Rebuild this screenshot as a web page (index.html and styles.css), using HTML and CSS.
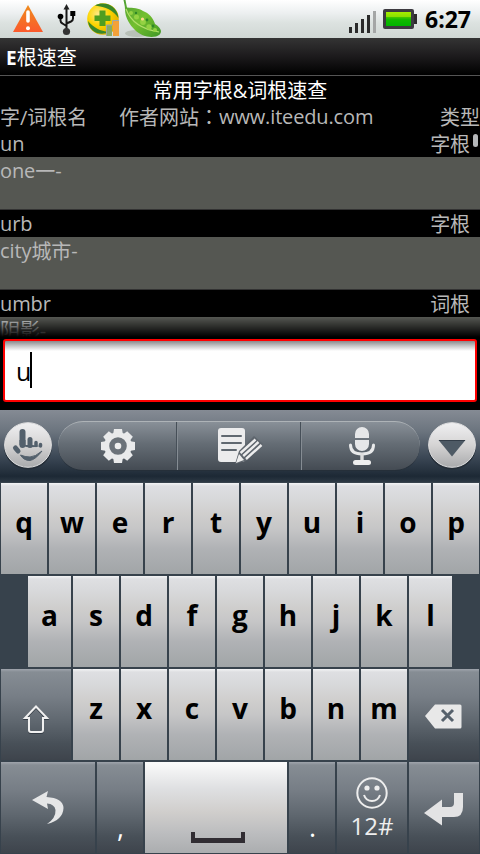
FILE: index.html
```html
<!DOCTYPE html>
<html lang="zh-CN">
<head>
<meta charset="utf-8">
<title>E根速查</title>
<link rel="stylesheet" href="styles.css">
</head>
<body>
<div class="screen">
  <header class="status">
    <svg class="notices" width="170" height="38" viewBox="0 0 170 38">
      <defs>
        <linearGradient id="warn" x1="0" y1="0" x2="0" y2="1"><stop offset="0" stop-color="#ee8b1c"/><stop offset="1" stop-color="#fb5a2c"/></linearGradient>
        <linearGradient id="pod" x1="0" y1="0" x2="1" y2="1"><stop offset="0" stop-color="#4f9f35"/><stop offset=".5" stop-color="#74c02f"/><stop offset="1" stop-color="#3f9626"/></linearGradient>
        <radialGradient id="ball" cx=".35" cy=".35" r=".7"><stop offset="0" stop-color="#ffe98a"/><stop offset=".5" stop-color="#fcd500"/><stop offset="1" stop-color="#dfae00"/></radialGradient>
      </defs>
      <path d="M28 5 43 32H13Z" fill="url(#warn)"/>
      <path d="M28 12v9" stroke="#fff" stroke-width="3.600" stroke-linecap="round"/><circle cx="28" cy="28.200" r="2" fill="#fff"/>
      <g fill="none" stroke="#161616" stroke-width="2"><path d="M66.500 8v23M60.500 17v3.500q0 2 2 3l4 2.500M73 14v4.500q0 2-2 3l-4.500 2"/></g>
      <path d="M66.500 4 69.500 9.500h-6Z" fill="#222"/><circle cx="60.500" cy="16.500" r="2.800"/><path d="M70.300 11h5v5h-5z"/><circle cx="66.500" cy="31.500" r="3.600" fill="#333"/>
      <circle cx="103" cy="19" r="15.800" fill="url(#ball)"/>
      <path d="M95 5.500C103 1 117 4 118.500 18 113 10 106 7 95 5.500ZM88 21c1 12 13 15 21 11-9-1-15-4-21-11Z" fill="#398729"/>
      <path d="M99.500 10.500h6v5h5v5.500h-5v5h-6v-5h-5v-5.500h5z" fill="#4f9e20"/>
      <path d="M107 25h5v11h-6V25Z" fill="#86a968"/><path d="M113 21h6v15h-6z" fill="#f3a13a"/><path d="M106.500 36V25h6v-4.500H119" fill="none" stroke="#9aa7aa"/>
      <ellipse cx="137" cy="33.500" rx="12" ry="3.500" fill="#b9c1b8"/>
      <path d="M123.500 0C124 3 125 6 125 9c0 9 5 16 10 21 6 6 14 8 21 6.500q5-1.500 5-5.500-1-4-6-7c-2-6-6-11-12-13-4-3-10-3-16-3.500Q126 3 125.500 0Z" fill="url(#pod)"/>
      <path d="M126 9c4 11 14 20 33 23" fill="none" stroke="#b2df6a" stroke-width="1.200"/>
      <g fill="#94d243"><circle cx="131" cy="13" r="2"/><circle cx="136.500" cy="17" r="2.500"/><circle cx="143" cy="22" r="2.900"/><circle cx="149" cy="27" r="2.700"/><circle cx="155" cy="30" r="2"/></g>
      <g fill="#2f8727"><circle cx="136" cy="13" r="1.200"/><circle cx="147" cy="20" r="1.400"/><circle cx="153" cy="26" r="1.400"/></g>
      <circle cx="142.500" cy="19" r="1.600" fill="#ffd98a"/>
    </svg>
    <svg class="meters" width="72" height="38" viewBox="0 0 72 38">
      <defs><linearGradient id="bat" x1="0" y1="0" x2="0" y2="1"><stop offset="0" stop-color="#a5ee00"/><stop offset=".33" stop-color="#8cdf00"/><stop offset=".34" stop-color="#4fc900"/><stop offset=".55" stop-color="#12b900"/><stop offset="1" stop-color="#00b400"/></linearGradient></defs>
      <path d="M1 27h3v6H1zM7 23h3v10H7zM13 19h3v14h-3zM19 15h3v18h-3z" fill="#2b2b2b"/><path d="M25 11h3v22h-3z" fill="#a4a6a6"/>
      <rect x="35" y="9" width="31" height="20" rx="2" fill="#3d3a40"/><path d="M66 14h3v10h-3z" fill="#2d2b2d"/><path d="M38 12h25v14H38z" fill="url(#bat)"/>
    </svg>
    <span class="clock">6:27</span>
  </header>
  <div class="titlebar"><b>E</b>根速查</div>
  <main class="content">
    <h1 class="heading">常用字根&amp;词根速查</h1>
    <div class="columns"><span class="zh">字/词根名</span><span class="site"><span class="zh">作者网站<span class="colon" lang="zh-Hant">：</span></span>www.iteedu.com</span><span class="zh">类型</span></div>
    <div class="list">
      <div class="word"><span>un</span><span class="zh">字根</span></div>
      <div class="meaning">one<span class="zh">一</span>-</div>
      <div class="word"><span>urb</span><span class="zh">字根</span></div>
      <div class="meaning">city<span class="zh">城市</span>-</div>
      <div class="word"><span>umbr</span><span class="zh">词根</span></div>
      <div class="meaning last"><span class="zh">阴影</span>-</div>
      <i class="thumb"></i><i class="fade"></i>
    </div>
    <div class="search"><span class="typed">u</span><i class="caret"></i></div>
  </main>
  <section class="keyboard">
    <div class="tools">
      <svg width="54" height="54" viewBox="0 0 54 54">
        <defs><linearGradient id="metal" x1="0" y1="0" x2="0" y2="1"><stop offset="0" stop-color="#f0f0f2"/><stop offset=".5" stop-color="#d5d4d4"/><stop offset="1" stop-color="#a9aaac"/></linearGradient></defs>
        <ellipse cx="27" cy="28.500" rx="24" ry="23" fill="#242d37"/><ellipse cx="27" cy="27" rx="23.400" ry="22.300" fill="url(#metal)" stroke="#e0e0e1"/>
        <g fill="none" stroke="#53606c" stroke-linecap="round"><path d="M21.500 14v13" stroke-width="6"/><path d="M29 21.500v6" stroke-width="5"/><path d="M35 24.500v3M39.500 26.500v1.500" stroke-width="3.500"/><path d="m14.500 30 2.500 3" stroke-width="5"/></g>
        <path d="M18.500 22h6v5h7l8 1q-8 2-14 1l-7-2z" fill="#53606c"/><path d="M19.500 37q3 5.500 9.500 5.500 5.500-1 12-9.500-7 6-12 6-5 0-9.500-2Z" fill="#53606c" stroke="#53606c"/>
      </svg>
      <div class="pill">
        <span class="tool"><svg width="36" height="36" viewBox="-18 -18 36 36">
          <g fill="#e9eaeb"><path d="M-4-17h8l1 6H-5zM-4 17h8l1-6H-5zM-17-4v8l6 1V-5zM17-4v8l-6 1V-5z"/><path transform="rotate(45)" d="M-4-17h8l1 7H-5zM-4 17h8l1-7H-5zM-17-4v8l7 1V-5zM17-4v8l-7 1V-5z"/></g>
          <circle r="11.300" fill="#6b7279" stroke="#e9eaeb" stroke-width="5"/><circle r="3.300" fill="#eee"/>
        </svg></span>
        <span class="tool"><svg width="46" height="38" viewBox="0 0 46 38">
          <rect x="1" y="1" width="27" height="34" rx="3" fill="#ececed"/><path d="M5 9h19M5 16h19M5 23h14" stroke="#606870" stroke-width="2" stroke-linecap="round"/>
          <path d="m18 37 4-13L37 9l9 8-17 17Z" fill="#5e656d"/><path d="m19 36 3-9 5 6Z" fill="#eee"/><path d="m23.500 26 15-13.500M26.200 29 41.500 15M29 32 44.500 18" stroke="#ededee" stroke-width="2.400"/>
        </svg></span>
        <span class="tool"><svg width="28" height="40" viewBox="0 0 28 40">
          <path d="M7 12V8a7 7 0 0 1 14 0v4zM7 14h14v4a7 7 0 0 1-14 0z" fill="#e6e7e9"/><path d="M2.500 19q0 9 11.500 9t11.500-9" fill="none" stroke="#e8e9ea" stroke-width="3" stroke-linecap="round"/><path d="M12.300 27h3.400v7h-3.400z" fill="#ddd"/><rect x="5" y="34" width="18" height="5" rx="2.500" fill="#eee"/>
        </svg></span>
      </div>
      <svg width="54" height="54" viewBox="0 0 54 54">
        <ellipse cx="27" cy="28.500" rx="24" ry="23" fill="#242d37"/><ellipse cx="27" cy="27" rx="23.400" ry="22.300" fill="url(#metal)" stroke="#e0e0e1"/><path d="M13.500 22h27L27 38.500Z" fill="#4e5a65"/><path d="M14 22.500h26" stroke="#333d48"/>
      </svg>
    </div>
    <div class="row"><kbd>q</kbd><kbd>w</kbd><kbd>e</kbd><kbd>r</kbd><kbd>t</kbd><kbd>y</kbd><kbd>u</kbd><kbd>i</kbd><kbd>o</kbd><kbd>p</kbd></div>
    <div class="row inset"><kbd class="edge-left">a</kbd><kbd>s</kbd><kbd>d</kbd><kbd>f</kbd><kbd>g</kbd><kbd>h</kbd><kbd>j</kbd><kbd>k</kbd><kbd class="edge-right">l</kbd></div>
    <div class="row">
      <kbd class="dark w72"><svg width="70" height="91" viewBox="0 0 70 91"><path d="M35 37.500 24 49h4v12q0 2 2 2h10q2 0 2-2V49h4Z" fill="none" stroke="#343c45" stroke-width="2" transform="translate(0 1)"/><path d="M35 37.500 24 49h4v12q0 2 2 2h10q2 0 2-2V49h4Z" fill="none" stroke="#f0f0f0" stroke-width="2"/></svg></kbd>
      <kbd>z</kbd><kbd>x</kbd><kbd>c</kbd><kbd>v</kbd><kbd>b</kbd><kbd>n</kbd><kbd>m</kbd>
      <kbd class="dark w72"><svg width="70" height="91" viewBox="0 0 70 91"><path d="M16 47 26 35.500h25q1.500 0 1.500 1.500v21q0 1.500-1.500 1.500H26Z" fill="#e8e8e8"/><path d="m33 41 11 11m0-11L33 52" stroke="#56616c" stroke-width="3"/></svg></kbd>
    </div>
    <div class="row">
      <kbd class="dark w96"><svg width="94" height="91" viewBox="0 0 94 91"><path d="M31 38 47 29l-1.500 6Q62 36 62.500 46 62 58 46 62q9-6 8.500-14-1-6-8.500-6.500L47 47Z" fill="#e5e6e7"/></svg></kbd>
      <kbd class="dark mark">,</kbd>
      <kbd class="space"><i></i></kbd>
      <kbd class="dark mark">.</kbd>
      <kbd class="dark w72 symbols"><svg width="34" height="34" viewBox="-17 -17 34 34"><g fill="none" stroke="#eee" stroke-width="2"><circle r="14.700"/><path d="M-8 2Q-6 8 0 8T8 2"/></g><g fill="#eee"><circle cx="-5" cy="-5" r="2.600"/><circle cx="5" cy="-5" r="2.600"/></g></svg><span>12#</span></kbd>
      <kbd class="dark w72"><svg width="70" height="91" viewBox="0 0 70 91"><path d="M15 51 33 37.500V45h8q4 0 4-4V31h9v14q0 10-9 10H33v8.500Z" fill="#e3e3e4"/></svg></kbd>
    </div>
  </section>
</div>
</body>
</html>
```

FILE: styles.css
```css
* { box-sizing: border-box; }
body { margin: 0; background: #000; }
.screen {
  width: 480px; height: 854px; overflow: hidden;
  display: flex; flex-direction: column;
  font: 20px/27px "Open Sans", "Noto Sans CJK SC", sans-serif;
  color: #b8b8b8;
}
svg { display: block; flex: none; }
.status { height: 38px; display: flex; align-items: center; background: linear-gradient(#fff, #eceff0 35%, #dce2e0 60%, #d0d7d4); }
.meters { margin-left: 178px; }
.clock { margin-left: 5px; color: #000; font-size: 23px; font-weight: 700; }
.titlebar {
  height: 38px; padding: 6px 0 0 6px; border-bottom: 1px solid #555;
  background: linear-gradient(#343434, #1c1a1c 50%, #000); color: #fff;
}
.titlebar b { font-size: 19px; }
.content { height: 334px; display: flex; flex-direction: column; }
.heading { margin: 0; height: 27px; padding-top: 1px; font-size: 20px; font-weight: 400; line-height: 27px; text-align: center; color: #fff; }
.zh { position: relative; top: 1px; }
.columns { height: 27px; display: flex; justify-content: space-between; }
.columns span { white-space: nowrap; }
.columns .site { margin-left: -35px; letter-spacing: -.15px; }
.site .zh { letter-spacing: 0; }
.colon { font-family: "Noto Sans CJK TC", sans-serif; line-height: 0; }
.list { position: relative; height: 207px; overflow: hidden; }
.word { height: 27px; display: flex; justify-content: space-between; padding-right: 10px; }
.meaning { height: 53px; background: #555752; border-bottom: 1px solid #333; }
.meaning, .word { letter-spacing: -.1px; }
.meaning.last { height: 20px; border: 0; color: #d4d6d6; }
.last .zh { top: 0; }
.thumb { position: absolute; right: 2px; top: 4px; width: 5px; height: 13px; border-radius: 3px; background: #b5b7b9; }
.fade { position: absolute; left: 0; right: 0; bottom: 0; height: 20px; background: linear-gradient(transparent, rgba(0, 0, 0, .5) 50%, #000); }
.search {
  height: 63px; margin: 2px 3px 0; display: flex; align-items: center; padding-left: 11px;
  border: 2px solid #f00; border-radius: 3px;
  background: linear-gradient(#8a8a8c, #c8c8c8 5px, #fff 10px);
}
.typed { font-size: 25px; color: #000; line-height: 36px; }
.caret { width: 2px; height: 36px; background: #000; margin: -2px 0 0 -1px; }
.keyboard { height: 444px; background: #37424c; }
.tools {
  height: 72px; padding: 8px 1px 10px; display: flex; align-items: center;
  background: linear-gradient(#858b94, #6b747e 30%, #3c4856 65%, #1d2935 92%, #2c3843);
}
.pill {
  flex: none; width: 362px; height: 50px; margin: 0 5px 0 3px; border-radius: 25px; display: flex;
  position: relative; top: 1px;
  background: linear-gradient(#899098, #656d75 45%, #444b53); border-top: 1px solid #aeb3b7; border-bottom: 1px solid #252f39;
}
.tool { width: 124px; display: flex; align-items: center; justify-content: center; border-left: 1px solid #858c93; box-shadow: -1px 0 #464f58; }
.tool:first-child { width: 119px; border: 0; box-shadow: none; }
.tool:last-child { width: 119px; padding-left: 2px; }
.row { display: flex; height: 93px; }
.inset { padding-left: 27px; }
kbd {
  flex: none; width: 46px; height: 91px; margin: 1px; text-align: center; color: #000;
  font: 700 28px/79px "Open Sans", sans-serif;
  background: linear-gradient(#f3f4f5 0, #dedfe2 3px, #d8d9db 16%, #cfcecd 35%, #c6c6c7 50%, #b0b2b5 72%, #a1a5a7);
}
.edge-left, .edge-right { width: 43px; }
.dark { background: linear-gradient(#a0a5ad 0, #868d94 3px, #777e86 30%, #5f676f 58%, #485058 82%, #3e444c); color: #fff; }
.w72 { width: 70px; }
.w96 { width: 94px; }
.mark { font-weight: 400; font-size: 27px; line-height: 130px; padding-left: 1px; }
.space { width: 142px; display: flex; justify-content: center; align-items: flex-end; padding: 0 0 10px 4px; background: linear-gradient(#fbfbfb, #dfe0e2 29%, #d0cecc 55%, #bcbdbf 78%, #abadaf); }
.space i { width: 54px; height: 11px; border: 4px solid #312d33; border-top: 0; border-bottom-width: 5px; }
.symbols { display: flex; flex-direction: column; align-items: center; padding-top: 14px; }
.symbols span { font-size: 24px; font-weight: 400; line-height: 31px; color: #eee; }
```
